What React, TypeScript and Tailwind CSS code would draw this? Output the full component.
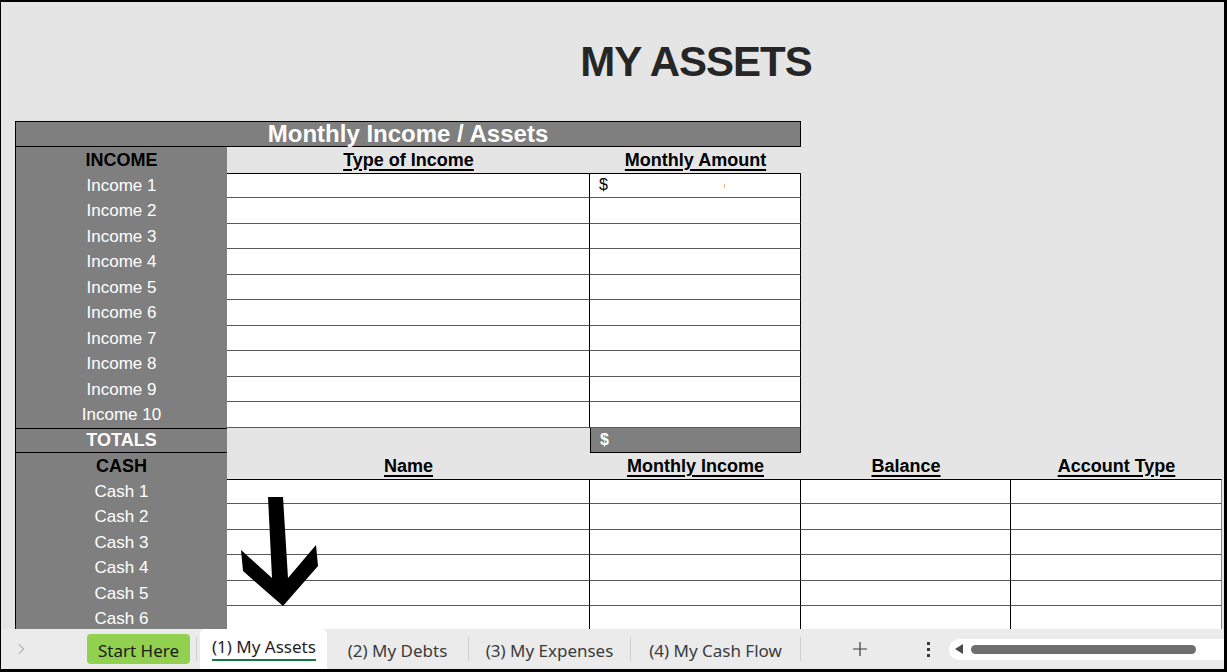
const incomeRows = [
  "Income 1",
  "Income 2",
  "Income 3",
  "Income 4",
  "Income 5",
  "Income 6",
  "Income 7",
  "Income 8",
  "Income 9",
  "Income 10",
];

const cashRows = ["Cash 1", "Cash 2", "Cash 3", "Cash 4", "Cash 5", "Cash 6"];

const rowH = "h-[25.5px] shrink-0";

const LabelCell = ({
  children,
  className = "",
}: {
  children: React.ReactNode;
  className?: string;
}) => (
  <div
    className={`w-[212px] shrink-0 bg-[#7f7f7f] border-l border-black flex items-center justify-center leading-none ${className}`}
  >
    {children}
  </div>
);

const HeadCell = ({ w, label }: { w: string; label: string }) => (
  <div className={`${w} shrink-0 flex items-center justify-center leading-none`}>
    <span className="text-[18px] font-bold text-black underline underline-offset-[3px] decoration-[1.5px]">
      {label}
    </span>
  </div>
);

const App = () => {
  return (
    <div className="relative w-[1227px] h-[672px] overflow-hidden bg-[#e5e5e5] border-t-2 border-l border-r-[3px] border-b-[3px] border-black flex flex-col">
      {/* sheet */}
      <section
        id="Sheet"
        className="h-[627px] shrink-0 overflow-hidden font-['Liberation_Sans',Arial,sans-serif]"
      >
        <div className="h-[119px] pt-[39px] pl-[167px] text-center">
          <h1 className="text-[42px] leading-[42px] font-bold tracking-[-1px] text-[#262626]">
            MY ASSETS
          </h1>
        </div>

        <div className="ml-[14px] flex flex-col">
          <div className="w-[786px] h-[26px] bg-[#7f7f7f] border border-black flex items-center justify-center">
            <span className="text-[24px] leading-none font-bold text-white">
              Monthly Income / Assets
            </span>
          </div>

          {/* income header */}
          <div className={`${rowH} flex`}>
            <LabelCell>
              <span className="text-[18px] font-bold text-black">INCOME</span>
            </LabelCell>
            <HeadCell w="w-[363px]" label="Type of Income" />
            <HeadCell w="w-[211px]" label="Monthly Amount" />
          </div>

          {incomeRows.map((name, i) => (
            <div key={name} className={`${rowH} flex`}>
              <LabelCell>
                <span className="text-[17px] text-white">{name}</span>
              </LabelCell>
              <div
                className={`w-[363px] shrink-0 bg-white border-r border-r-black border-b border-b-[#595959] ${
                  i === 0 ? "border-t border-t-black" : ""
                }`}
              />
              <div
                className={`relative w-[211px] shrink-0 bg-white border-r border-r-black border-b border-b-[#595959] flex items-center pl-[9px] ${
                  i === 0 ? "border-t border-t-black" : ""
                }`}
              >
                {i === 0 && (
                  <>
                    <span className="text-[16px] leading-none text-black">$</span>
                    <span className="absolute left-[134px] top-[10px] w-px h-[4px] bg-[#f0b070]" />
                  </>
                )}
              </div>
            </div>
          ))}

          {/* totals */}
          <div className={`${rowH} flex`}>
            <LabelCell className="border-t border-b border-t-black border-b-black">
              <span className="text-[18px] font-bold text-white">TOTALS</span>
            </LabelCell>
            <div className="w-[363px] shrink-0" />
            <div className="w-[211px] shrink-0 bg-[#7f7f7f] border-x border-b border-black flex items-center pl-[9px]">
              <span className="text-[16px] leading-none font-bold text-white">$</span>
            </div>
          </div>

          {/* cash header */}
          <div className={`${rowH} flex`}>
            <LabelCell>
              <span className="text-[18px] font-bold text-black">CASH</span>
            </LabelCell>
            <HeadCell w="w-[363px]" label="Name" />
            <HeadCell w="w-[211px]" label="Monthly Income" />
            <HeadCell w="w-[210px]" label="Balance" />
            <HeadCell w="w-[211px]" label="Account Type" />
          </div>

          {cashRows.map((name, i) => {
            const top = i === 0 ? "border-t border-t-black" : "";
            return (
              <div key={name} className={`${rowH} flex`}>
                <LabelCell>
                  <span className="text-[17px] text-white">{name}</span>
                </LabelCell>
                <div className={`w-[363px] shrink-0 bg-white border-r border-r-black border-b border-b-[#595959] ${top}`} />
                <div className={`w-[211px] shrink-0 bg-white border-r border-r-black border-b border-b-[#595959] ${top}`} />
                <div className={`w-[210px] shrink-0 bg-white border-r border-r-black border-b border-b-[#595959] ${top}`} />
                <div className={`w-[211px] shrink-0 bg-white border-r border-r-[#8a8a8a] border-b border-b-[#595959] ${top}`} />
              </div>
            );
          })}
        </div>
      </section>

      {/* sheet tabs */}
      <nav className="h-[40px] shrink-0 bg-[#ebebeb] flex items-center font-['Noto_Sans',sans-serif] text-[17px] leading-none">
        <div className="w-[40px] h-full flex items-center justify-center text-[#8c8c8c]">
          <svg viewBox="0 0 24 24" fill="none" stroke="currentColor" strokeWidth={1.5} className="w-[16px] h-[16px]">
            <path d="M9 5l7 7-7 7" />
          </svg>
        </div>
        <button
          type="button"
          className="ml-[46px] w-[103px] h-[30px] rounded-[4px] bg-[#92d050] text-[#1a1a1a] flex items-center justify-center pt-[2px]"
        >
          Start Here
        </button>
        <span className="ml-[6px] w-px h-[24px] bg-[#cfcfcf]" />
        <div className="ml-[3px] w-[127px] self-stretch bg-white rounded-t-[5px] flex flex-col pl-[12px] pt-[9px]">
          <span className="text-[#1f1f1f] w-max border-b-2 border-[#107c41] pb-[4px]">
            (1) My Assets
          </span>
        </div>
        <div className="w-[141px] h-full flex items-center justify-center text-[#3b3b3b] pt-[2px]">
          (2) My Debts
        </div>
        <span className="w-px h-[24px] bg-[#cfcfcf]" />
        <div className="w-[161px] h-full flex items-center justify-center text-[#3b3b3b] pt-[2px]">
          (3) My Expenses
        </div>
        <span className="w-px h-[24px] bg-[#cfcfcf]" />
        <div className="w-[169px] h-full flex items-center justify-center text-[#3b3b3b] pt-[2px]">
          (4) My Cash Flow
        </div>
        <span className="w-px h-[24px] bg-[#cfcfcf]" />
        <div className="ml-[39px] w-[40px] h-full flex items-center justify-center text-[#3b3b3b]">
          <svg viewBox="0 0 16 16" fill="none" stroke="currentColor" strokeWidth={1.2} className="w-[16px] h-[16px]">
            <path d="M8 1v14M1 8h14" />
          </svg>
        </div>
        <div className="ml-[28px] w-[40px] h-full flex flex-col items-center justify-center gap-[3px]">
          <span className="w-[3px] h-[3px] bg-[#3b3b3b]" />
          <span className="w-[3px] h-[3px] bg-[#3b3b3b]" />
          <span className="w-[3px] h-[3px] bg-[#3b3b3b]" />
        </div>
        <div className="ml-px flex-1 h-[21px] bg-white rounded-l-full flex items-center pl-[6px]">
          <svg viewBox="0 0 8 10" className="w-[8px] h-[10px]">
            <path d="M8 0v10L0 5z" fill="#4a4a4a" />
          </svg>
          <span className="ml-[8px] w-[225px] h-[9px] rounded-full bg-[#6e6e6e]" />
        </div>
      </nav>

      {/* hand drawn arrow over the sheet */}
      <svg
        className="absolute left-[-1px] top-[-2px] pointer-events-none"
        width={1227}
        height={672}
        viewBox="0 0 1227 672"
      >
        <polygon
          points="268,497 283,497 288,578 316,545 318,566 283,606 243,571 241,550 272,578"
          fill="#000"
        />
      </svg>
    </div>
  );
};

export default App;
